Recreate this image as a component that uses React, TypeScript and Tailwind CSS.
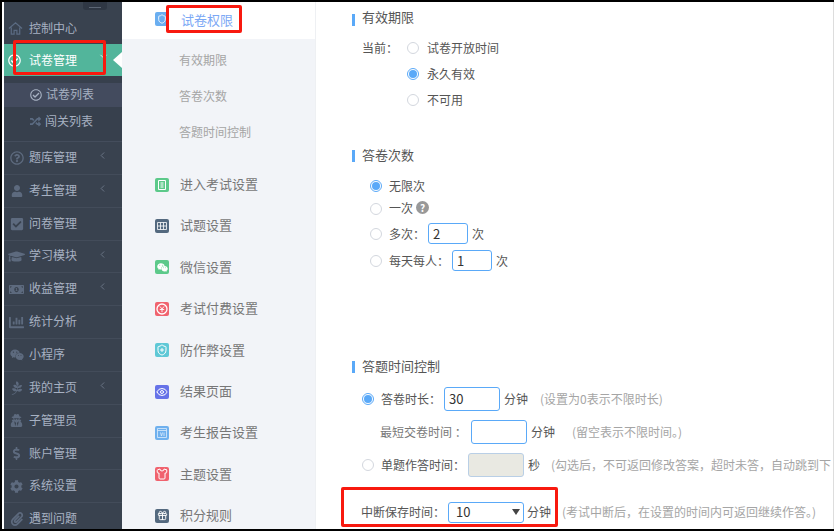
import type { ReactNode } from "react";
import {
  FaChartBar,
  FaCheckSquare,
  FaCog,
  FaDollarSign,
  FaGraduationCap,
  FaMoneyBillAlt,
  FaPagelines,
  FaPaperclip,
  FaRandom,
  FaRegCheckCircle,
  FaRegQuestionCircle,
  FaUser,
  FaUserSecret,
  FaWeixin,
} from "react-icons/fa";
import {
  ChevronDown,
  ChevronLeft,
  Eye,
  Gift,
  Shield,
  ShieldPlus,
  Shirt,
} from "lucide-react";

const font = "font-['Noto_Sans_CJK_SC','Liberation_Sans',sans-serif]";

// full-width punctuation
const colon = "\uFF1A";
const comma = "\uFF0C";

const sideRows = [
  { label: "题库管理", icon: <FaRegQuestionCircle />, more: true },
  { label: "考生管理", icon: <FaUser className="text-[12px]" />, more: true },
  { label: "问卷管理", icon: <FaCheckSquare />, more: false },
  { label: "学习模块", icon: <FaGraduationCap className="text-[17px]" />, more: true },
  { label: "收益管理", icon: <FaMoneyBillAlt className="text-[15px]" />, more: true },
  { label: "统计分析", icon: <FaChartBar className="text-[15px]" />, more: false },
  { label: "小程序", icon: <FaWeixin />, more: false },
  { label: "我的主页", icon: <FaPagelines />, more: true },
  { label: "子管理员", icon: <FaUserSecret className="text-[13px]" />, more: false },
  { label: "账户管理", icon: <FaDollarSign className="text-[13px]" />, more: false },
  { label: "系统设置", icon: <FaCog className="text-[13px]" />, more: false },
  { label: "遇到问题", icon: <FaPaperclip />, more: false },
];

const settingRows = [
  {
    label: "进入考试设置",
    color: "bg-[#5cc98a]",
    icon: (
      <svg viewBox="0 0 10 10" className="h-[10px] w-[10px]" fill="none" stroke="currentColor">
        <path d="M1.5.5h7v9h-7zM3.5 3h3M3.5 5h3M3.5 7h3" />
      </svg>
    ),
  },
  {
    label: "试题设置",
    color: "bg-[#54697f]",
    icon: (
      <svg viewBox="0 0 10 10" className="h-[10px] w-[10px]" fill="none" stroke="currentColor" strokeWidth="0.8">
        <path d="M.5 1.5h9v7h-9zM.5 5h9M3.5 1.5v7M6.5 1.5v7" />
      </svg>
    ),
  },
  { label: "微信设置", color: "bg-[#5cc98a]", icon: <FaWeixin className="text-[11px]" /> },
  {
    label: "考试付费设置",
    color: "bg-[#f0626e]",
    icon: (
      <svg viewBox="0 0 12 12" className="h-[12px] w-[12px]" fill="none" stroke="currentColor">
        <circle cx="6" cy="6" r="5" strokeWidth="1.3" />
        <path d="M4 3.5 6 6l2-2.5M3.8 6.5h4.4M6 6v3.2" strokeWidth="0.9" />
      </svg>
    ),
  },
  { label: "防作弊设置", color: "bg-[#5fc8d6]", icon: <ShieldPlus size={12} /> },
  { label: "结果页面", color: "bg-[#6672e8]", icon: <Eye size={12} /> },
  {
    label: "考生报告设置",
    color: "bg-[#6fb0ee]",
    icon: (
      <svg viewBox="0 0 10 10" className="h-[10px] w-[10px]" fill="none" stroke="#dcebfb">
        <path d="M.5.5h9v9h-9zM.5 2.5h9M3.5 4.5l1 3.5 1-3.5M7 4.5V8" strokeWidth="0.8" />
      </svg>
    ),
  },
  { label: "主题设置", color: "bg-[#f0626e]", icon: <Shirt size={12} /> },
  { label: "积分规则", color: "bg-[#54697f]", icon: <Gift size={11} /> },
];

function Radio({ checked = false }: { checked?: boolean }) {
  return (
    <span
      className={`flex h-3 w-3 shrink-0 items-center justify-center rounded-full border bg-white ${
        checked ? "border-[#5aa9f8]" : "border-[#d3d7de]"
      }`}
    >
      {checked && <span className="h-[8px] w-[8px] rounded-full bg-[#5aa9f8]" />}
    </span>
  );
}

function Title({ children, textClass = "-mt-[3px]" }: { children: ReactNode; textClass?: string }) {
  return (
    <div className="ml-9 flex h-[14px] items-center text-[13px] text-[#555]">
      <span className="h-3 w-[3px] bg-[#5aa9f8]" />
      <span className={`ml-[7px] ${textClass}`}>{children}</span>
    </div>
  );
}

function TextBox({ value, className }: { value?: string; className: string }) {
  return (
    <div
      className={`flex shrink-0 items-center rounded-[3px] border border-[#5aa9f8] pl-[4px] text-[13px] text-[#333] ${className}`}
    >
      {value}
    </div>
  );
}

function Marker({ className }: { className: string }) {
  return (
    <div
      className={`pointer-events-none absolute rounded-[2px] border-[3px] border-[#f8190f] ${className}`}
    />
  );
}

export default function App() {
  return (
    <div
      lang="zh-CN"
      className={`${font} relative flex h-[531px] w-[834px] overflow-hidden border-y-2 border-l-2 border-black bg-white pl-[2px]`}
    >
      {/* left nav */}
      <aside className="w-[118px] shrink-0 bg-[#39424f] text-[12px] text-[#a7b1c2]">
        <div className="flex h-[10px] justify-end pr-[15px]">
          <div className="flex h-[8px] w-6 flex-col items-center justify-end gap-[2px] rounded-b-[3px] bg-[#2f3744] pb-[2px]">
            <span className="h-px w-3 bg-[#5c6675]" />
          </div>
        </div>
        <div className="flex h-8 items-center">
          <svg viewBox="0 0 16 16" className="ml-1 h-[15px] w-[15px] text-[#5b6b82]" fill="none" stroke="currentColor" strokeWidth="1.3">
            <path d="M1 8 8 2l7 6M3.5 7v7h3v-4h3v4h3V7" />
          </svg>
          <span className="ml-[6px]">控制中心</span>
        </div>
        <div className="relative flex h-8 items-center bg-[#52b59b] text-white">
          <FaRegCheckCircle className="ml-[4px] text-[13px]" />
          <span className="ml-[8px]">试卷管理</span>
          <ChevronDown size={11} className="absolute left-[94px] top-[7px] text-[#dff3ee]" />
          <span className="absolute right-0 top-[8px] h-0 w-0 border-y-[8px] border-r-[9px] border-y-transparent border-r-white" />
        </div>
        <div className="border-b border-[#444d5c] bg-[#37404d] pb-[6px] pt-[7px]">
          <div className="flex h-6 items-center bg-[#434b5e] pl-[26px]">
            <FaRegCheckCircle className="text-[12px]" />
            <span className="-mt-[2px] ml-[4px]">试卷列表</span>
          </div>
          <div className="flex h-[28px] items-center pl-[26px]">
            <FaRandom className="text-[11px] text-[#5b6b82]" />
            <span className="ml-[4px]">闯关列表</span>
          </div>
        </div>
        {sideRows.map((row) => (
          <div
            key={row.label}
            className="relative flex h-[32.85px] items-center border-b border-[#434c5a]"
          >
            <span className="flex w-[25px] justify-center text-[14px] text-[#5d6a7e]">
              {row.icon}
            </span>
            <span className="-mt-[2px]">{row.label}</span>
            {row.more && (
              <ChevronLeft size={11} className="absolute left-[93px] top-[8px] text-[#6d7889]" />
            )}
          </div>
        ))}
      </aside>

      {/* settings menu */}
      <nav className="w-[194px] shrink-0 border-r border-[#eef0f3] bg-[#f2f4f8] text-[#777]">
        <div className="relative flex h-[37px] items-center bg-white pl-[33px]">
          <span className="absolute top-[10px] flex h-[14px] w-[14px] items-center justify-center rounded-[2px] bg-[#6aaef0] text-white">
            <Shield size={10} />
          </span>
          <span className="-mt-[2px] ml-[26px] text-[13px] text-[#7ba8f5]">试卷权限</span>
        </div>
        <div className="pt-[3px] text-[12px] text-[#a5a5a5]">
          <div className="flex h-9 items-center pl-[57px]">有效期限</div>
          <div className="flex h-9 items-center pl-[57px]">答卷次数</div>
          <div className="flex h-9 items-center pl-[57px]">答题时间控制</div>
        </div>
        <div className="pt-[14px] text-[13px]">
          {settingRows.map((row) => (
            <div key={row.label} className="flex h-[41.4px] items-center pl-[33px]">
              <span
                className={`flex h-[14px] w-[14px] items-center justify-center rounded-[2px] text-white ${row.color}`}
              >
                {row.icon}
              </span>
              <span className="-mt-[2px] ml-[11px]">{row.label}</span>
            </div>
          ))}
        </div>
      </nav>

      {/* form */}
      <main className="min-w-0 flex-1 overflow-hidden whitespace-nowrap border-r border-[#dddddd] text-[12px] text-[#555]">
        <section className="pt-[11px]">
          <Title textClass="-mt-[6px]">有效期限</Title>
          <div className="ml-[46px] mt-[8px] flex">
            <span className="flex h-[26px] w-[45px] items-center">当前{colon}</span>
            <div>
              <div className="flex h-[26px] items-center gap-2">
                <Radio />
                试卷开放时间
              </div>
              <div className="flex h-[26px] items-center gap-2">
                <Radio checked />
                永久有效
              </div>
              <div className="flex h-[26px] items-center gap-2">
                <Radio />
                不可用
              </div>
            </div>
          </div>
        </section>

        <section className="mt-[36px]">
          <Title>答卷次数</Title>
          <div className="ml-[54px] mt-[11px]">
            <div className="flex h-[23px] items-center gap-[7px]">
              <Radio checked />
              <span>无限次</span>
            </div>
            <div className="flex h-[23px] items-center gap-[7px]">
              <Radio />
              <span className="-mt-[2px]">一次</span>
              <span className="-ml-[4px] -mt-[3px] flex h-[13px] w-[13px] items-center justify-center rounded-full bg-[#999] text-[10px] font-bold text-white">
                ?
              </span>
            </div>
            <div className="mt-[1px] flex h-[25px] items-center gap-[7px]">
              <Radio />
              <span>多次{colon}</span>
              <TextBox value="2" className="-ml-[4px] h-[21px] w-10" />
              <span className="-ml-[3px]">次</span>
            </div>
            <div className="mt-[2px] flex h-[25px] items-center gap-[7px]">
              <Radio />
              <span>每天每人{colon}</span>
              <TextBox value="1" className="-ml-[4px] h-[21px] w-10" />
              <span className="-ml-[3px]">次</span>
            </div>
          </div>
        </section>

        <section className="mt-[87px]">
          <Title>答题时间控制</Title>
          <div className="ml-[46px] mt-[12px]">
            <div className="flex h-[26px] items-center">
              <Radio checked />
              <span className="ml-[7px] w-[63px] shrink-0">答卷时长{colon}</span>
              <TextBox value="30" className="h-6 w-14" />
              <span className="ml-[4px] shrink-0">分钟</span>
              <span className="ml-3 text-[#a5a5a5]">(设置为0表示不限时长)</span>
            </div>
            <div className="mt-[7px] flex h-[26px] items-center pl-[18px] text-[#777]">
              <span className="w-[91px] shrink-0">最短交卷时间 {colon}</span>
              <TextBox className="h-6 w-14" />
              <span className="ml-[4px] shrink-0 text-[#555]">分钟</span>
              <span className="ml-[17px] text-[#a5a5a5]">(留空表示不限时间。)</span>
            </div>
            <div className="mt-[7px] flex h-[26px] items-center">
              <Radio />
              <span className="ml-[7px] w-[87px] shrink-0">单题作答时间{colon}</span>
              <div className="h-6 w-14 shrink-0 rounded-[3px] border border-[#b9cfe6] bg-[#e9e9e2]" />
              <span className="ml-[4px] shrink-0">秒</span>
              <span className="ml-[11px] text-[#a5a5a5]">
                {`(勾选后${comma}不可返回修改答案${comma}超时未答${comma}自动跳到下`}
              </span>
            </div>
            <div className="-ml-[1px] mt-[22px] flex h-[24px] items-center">
              <span className="w-[87px] shrink-0">中断保存时间{colon}</span>
              <div className="flex h-[21px] w-[76px] shrink-0 items-center justify-between rounded-[3px] border border-[#5aa9f8] pl-[7px] pr-[3px] text-[13px] text-[#333]">
                10
                <span className="h-0 w-0 border-x-[4px] border-t-[6px] border-x-transparent border-t-[#444]" />
              </div>
              <span className="ml-[3px] shrink-0">分钟</span>
              <span className="ml-[11px] text-[#a5a5a5]">
                {`(考试中断后${comma}在设置的时间内可返回继续作答。)`}
              </span>
            </div>
          </div>
        </section>
      </main>

      <Marker className="left-[11px] top-[38px] h-[35px] w-[93px]" />
      <Marker className="left-[164px] top-[3px] h-[28px] w-[76px]" />
      <Marker className="left-[339px] top-[485px] h-[40px] w-[217px]" />
    </div>
  );
}
